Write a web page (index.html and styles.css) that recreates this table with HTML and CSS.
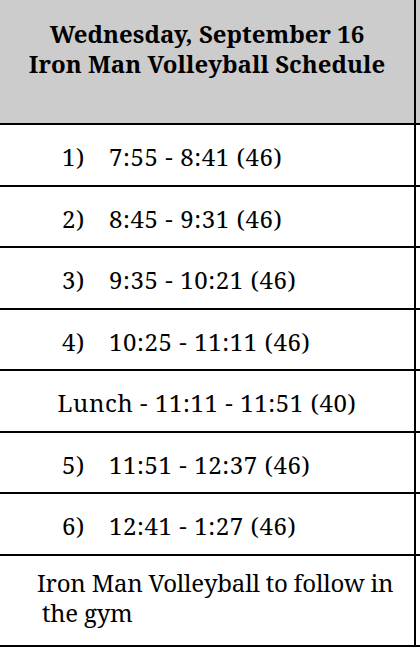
FILE: index.html
```html
<!DOCTYPE html>
<html>
<head>
<meta charset="utf-8">
<link rel="stylesheet" href="styles.css">
</head>
<body>
<div class="sheet">
  <div class="row head">
    <div class="cell title">Wednesday, September 16<br>Iron Man Volleyball Schedule</div>
    <div class="cell2"></div>
  </div>
  <div class="row">
    <div class="cell item"><span class="num">1)</span>7:55 - 8:41 (46)</div>
    <div class="cell2"></div>
  </div>
  <div class="row">
    <div class="cell item"><span class="num">2)</span>8:45 - 9:31 (46)</div>
    <div class="cell2"></div>
  </div>
  <div class="row">
    <div class="cell item"><span class="num">3)</span>9:35 - 10:21 (46)</div>
    <div class="cell2"></div>
  </div>
  <div class="row">
    <div class="cell item"><span class="num">4)</span>10:25 - 11:11 (46)</div>
    <div class="cell2"></div>
  </div>
  <div class="row">
    <div class="cell center">Lunch - 11:11 - 11:51 (40)</div>
    <div class="cell2"></div>
  </div>
  <div class="row">
    <div class="cell item"><span class="num">5)</span>11:51 - 12:37 (46)</div>
    <div class="cell2"></div>
  </div>
  <div class="row">
    <div class="cell item"><span class="num">6)</span>12:41 - 1:27 (46)</div>
    <div class="cell2"></div>
  </div>
  <div class="row last">
    <div class="cell note">Iron Man Volleyball to follow in<br><span class="indent">the gym</span></div>
    <div class="cell2"></div>
  </div>
</div>
</body>
</html>
```
FILE: styles.css
```css
html, body {
  margin: 0;
  padding: 0;
  background: #ffffff;
  overflow: hidden;
}
.sheet {
  width: 420px;
  font-family: "Noto Serif", "DejaVu Serif", serif;
  font-size: 24px;
  line-height: 30px;
  color: #000000;
  letter-spacing: 0.6px;
}
.row {
  display: flex;
  height: 59.57px;
  border-bottom: 2px solid #000000;
}
.cell {
  width: 416px;
  flex: none;
  box-sizing: border-box;
  border-right: 2px solid #000000;
  padding-top: 17px;
  white-space: nowrap;
}
.cell2 {
  flex: 1;
}
.head {
  height: 123px;
  background: #cccccc;
}
.title {
  font-weight: bold;
  text-align: center;
  letter-spacing: 0;
  padding-top: 19px;
}
.item {
  padding-left: 62px;
}
.num {
  display: inline-block;
  width: 47px;
}
.center {
  text-align: center;
}
.last {
  height: 89px;
}
.note {
  padding-left: 37px;
  padding-top: 12px;
  letter-spacing: -0.2px;
}
.indent {
  margin-left: 5px;
}
```
